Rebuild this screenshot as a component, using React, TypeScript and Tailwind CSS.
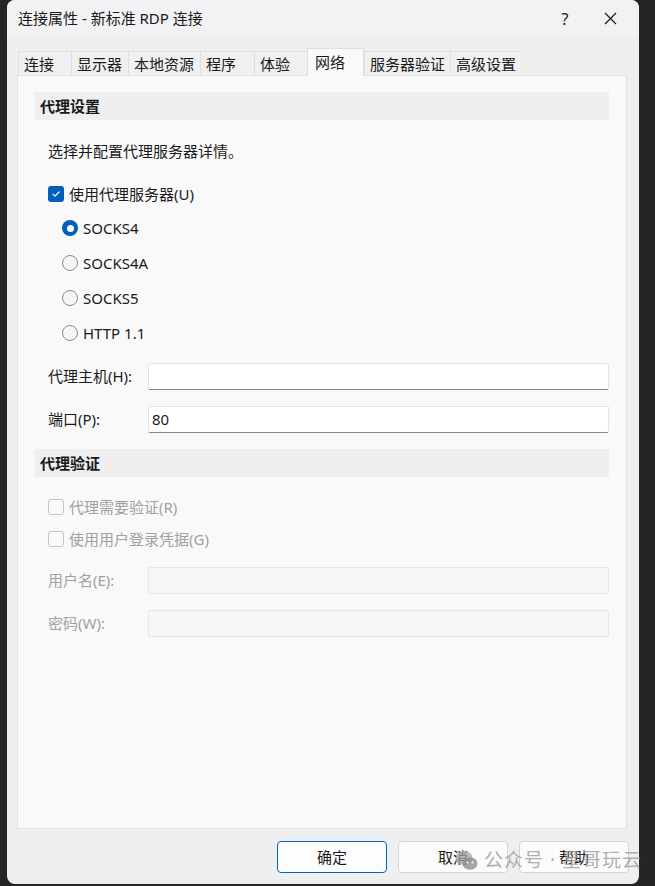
import React from "react";

const tabs = ["连接", "显示器", "本地资源", "程序", "体验", "网络", "服务器验证", "高级设置"];
const tabWidths = [53, 57, 72, 54, 53, 57, 86, 70];

function CheckBox({ checked, disabled }: { checked?: boolean; disabled?: boolean }) {
  if (checked) {
    return (
      <span className="flex h-[16px] w-[16px] items-center justify-center rounded-[3px] bg-[#005fb8]">
        <svg width="10" height="10" viewBox="0 0 10 10" fill="none">
          <path d="M2 5.2 L4 7.2 L8 3" stroke="white" strokeWidth="1.2" strokeLinecap="round" strokeLinejoin="round" />
        </svg>
      </span>
    );
  }
  return (
    <span
      className={`h-[16px] w-[16px] rounded-[3px] border bg-[#f9f9f9] ${
        disabled ? "border-[#c4c4c4]" : "border-[#868686]"
      }`}
    />
  );
}

function Radio({ checked }: { checked?: boolean }) {
  if (checked) {
    return (
      <span className="flex h-[16px] w-[16px] items-center justify-center rounded-full bg-[#005fb8]">
        <span className="h-[7px] w-[7px] rounded-full bg-white" />
      </span>
    );
  }
  return <span className="h-[16px] w-[16px] rounded-full border border-[#8a8a8a] bg-[#f6f6f6]" />;
}

function SectionBar({ title, className = "" }: { title: string; className?: string }) {
  return (
    <div className={`flex h-[28px] items-center bg-[#efefef] pl-[5px] font-bold text-[15px] text-[#1a1a1a] ${className}`}>
      {title}
    </div>
  );
}

function Field({
  label,
  value,
  disabled,
  className = "",
}: {
  label: string;
  value?: string;
  disabled?: boolean;
  className?: string;
}) {
  return (
    <div className={`flex h-[27px] items-center pl-[13px] ${className}`}>
      <span className={`w-[100px] text-[15px] ${disabled ? "text-[#a0a0a0]" : "text-[#1a1a1a]"}`}>{label}</span>
      <div
        className={`flex h-[27px] flex-1 items-center rounded-[2px] border px-[3px] text-[15px] ${
          disabled
            ? "border-[#e6e6e6] bg-[#f7f7f7]"
            : "border-[#e3e3e3] border-b-[#868686] bg-white text-[#1a1a1a]"
        }`}
      >
        {value}
      </div>
    </div>
  );
}

export default function App() {
  return (
    <div
      className="relative h-[886px] w-[655px] overflow-hidden bg-[#272428]"
      style={{ fontFamily: '"Noto Sans", "Noto Sans CJK SC", sans-serif' }}
    >
      <div className="ml-[7px] flex h-[884px] w-[632px] flex-col overflow-hidden rounded-[8px] bg-[#efefef]">
        {/* title bar */}
        <div className="flex h-[37px] shrink-0 items-center bg-[#f2f2f5] pl-[11px] text-[15px] text-[#1a1a1a]">
          <span className="flex-1">连接属性 - 新标准 RDP 连接</span>
          <span className="w-[60px] text-center text-[16px]">?</span>
          <span className="mr-[14px] flex w-[30px] justify-center">
            <svg width="13" height="13" viewBox="0 0 13 13">
              <path d="M1 1 L12 12 M12 1 L1 12" stroke="#1a1a1a" strokeWidth="1.2" />
            </svg>
          </span>
        </div>

        {/* tabs */}
        <div className="mt-[11px] flex h-[27px] items-end pl-[11px]">
          {tabs.map((t, i) =>
            t === "网络" ? (
              <div
                key={t}
                style={{ width: tabWidths[i] }}
                className="relative z-10 -mb-px flex h-[28px] items-start border border-b-0 border-[#e0e0e0] bg-[#f9f9f9] pl-[7px] pt-[2px] text-[15px] text-[#1a1a1a]"
              >
                {t}
              </div>
            ) : (
              <div
                key={t}
                style={{ width: tabWidths[i] }}
                className="flex h-[24px] items-center border border-b-0 border-r-0 border-[#e0e0e0] bg-[#f0f0f0] pl-[5px] pt-[2px] text-[15px] text-[#1a1a1a]"
              >
                {t}
              </div>
            )
          )}
        </div>

        {/* page */}
        <div className="ml-[10px] flex h-[754px] w-[610px] flex-col border border-[#e2e2e2] bg-[#f9f9f9] px-[17px] pt-[16px] text-[15px] text-[#1a1a1a]">
          <SectionBar title="代理设置" />
          <div className="mt-[21px] flex h-[20px] items-center pl-[13px]">选择并配置代理服务器详情。</div>
          <div className="mt-[23px] flex h-[20px] items-center gap-[5px] pl-[13px]">
            <CheckBox checked />
            <span>使用代理服务器(U)</span>
          </div>
          {["SOCKS4", "SOCKS4A", "SOCKS5", "HTTP 1.1"].map((r, i) => (
            <div key={r} className={`flex h-[20px] items-center gap-[5px] pl-[27px] ${i === 0 ? "mt-[14px]" : "mt-[15px]"}`}>
              <Radio checked={i === 0} />
              <span>{r}</span>
            </div>
          ))}
          <Field label="代理主机(H):" className="mt-[20px]" />
          <Field label="端口(P):" value="80" className="mt-[16px]" />

          <SectionBar title="代理验证" className="mt-[16px]" />
          <div className="mt-[20px] flex h-[20px] items-center gap-[5px] pl-[13px] text-[#a0a0a0]">
            <CheckBox disabled />
            <span>代理需要验证(R)</span>
          </div>
          <div className="mt-[12px] flex h-[20px] items-center gap-[5px] pl-[13px] text-[#a0a0a0]">
            <CheckBox disabled />
            <span>使用用户登录凭据(G)</span>
          </div>
          <Field label="用户名(E):" disabled className="mt-[18px]" />
          <Field label="密码(W):" disabled className="mt-[16px]" />
        </div>

        {/* dialog buttons */}
        <div className="mt-[12px] flex justify-end gap-[11px] pr-[10px] text-[15px] text-[#1a1a1a]">
          <button className="h-[32px] w-[110px] rounded-[4px] border border-[#0067c0] bg-[#fdfdfd]">确定</button>
          <button className="h-[32px] w-[110px] rounded-[4px] border border-[#d5d5d5] bg-[#fbfbfb]">取消</button>
          <button className="h-[32px] w-[110px] rounded-[4px] border border-[#d5d5d5] bg-[#fbfbfb]">帮助</button>
        </div>
      </div>

      {/* watermark overlay */}
      <div className="absolute left-[455px] top-[846px] flex items-center gap-[6px] text-[19px] text-[#9a9a9a]/80">
        <svg width="23" height="21" viewBox="0 0 23 21">
          <ellipse cx="9" cy="8" rx="8.5" ry="7" fill="#a3a3a3" fillOpacity="0.75" />
          <ellipse cx="15" cy="13.5" rx="7.5" ry="6.2" fill="#8f8f8f" fillOpacity="0.8" />
          <circle cx="12.5" cy="12.5" r="1.1" fill="#fff" />
          <circle cx="17.5" cy="12.5" r="1.1" fill="#fff" />
        </svg>
        <span className="tracking-[1px]">公众号 · 星哥玩云</span>
      </div>
    </div>
  );
}
